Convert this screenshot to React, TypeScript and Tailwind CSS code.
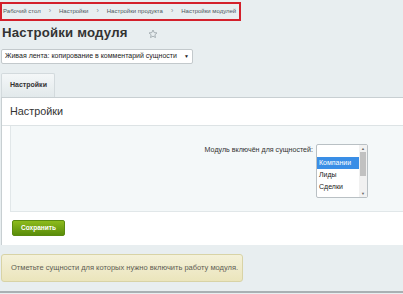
import React from "react";

export default function App() {
  const f = { fontFamily: '"Liberation Sans", Arial, sans-serif' };
  return (
    <div style={f} className="w-[403px] h-[294px] overflow-hidden bg-[#e8eef0] relative">
      {/* breadcrumb */}
      <div className="pt-[2px]">
        <div className="ml-0 w-[241px] h-[19px] border-2 border-[#d3202b] flex items-center gap-[8px] pl-[1px] text-[6px] text-[#4f5960] whitespace-nowrap">
          <span>Рабочий стол</span>
          <span className="text-[7px] text-[#8a9298]">›</span>
          <span>Настройки</span>
          <span className="text-[7px] text-[#8a9298]">›</span>
          <span>Настройки продукта</span>
          <span className="text-[7px] text-[#8a9298]">›</span>
          <span>Настройки модулей</span>
        </div>
      </div>
      {/* title */}
      <div className="flex items-center h-[22px] pl-[2px] mt-[1px]">
        <span className="text-[13.2px] font-bold text-[#333] tracking-[0.2px]">Настройки модуля</span>
        <svg className="ml-[20px] mt-[1px]" width="10" height="10" viewBox="0 0 24 24" fill="none" stroke="#9aa3a8" strokeWidth="2">
          <path d="M12 2.5l2.9 6.2 6.6.7-5 4.5 1.4 6.6L12 17.2 6.1 20.5l1.4-6.6-5-4.5 6.6-.7z" />
        </svg>
      </div>
      {/* select */}
      <div className="mt-[5px] ml-[1px] w-[192px] h-[15px] bg-white border border-[#c3c9cc] rounded-[2px] flex items-center justify-between px-[3px] text-[7px] text-[#222]">
        <span>Живая лента: копирование в комментарий сущности</span>
        <span className="text-[5px]">▼</span>
      </div>
      {/* tab */}
      <div className="mt-[9px] ml-[1px] flex">
        <div className="w-[54px] h-[24px] bg-gradient-to-b from-[#f4f7f8] to-[#e2e9eb] border border-b-0 border-[#d3dadd] rounded-t-[2px] flex items-center pl-[8px] text-[7px] font-bold text-[#333]">
          Настройки
        </div>
      </div>
      {/* panel */}
      <div className="ml-[1px] bg-white border-t border-l border-[#c8cfd2] h-[148px]">
        <div className="h-[28px] flex items-center pl-[8px] text-[10.8px] text-[#333] border-b border-[#dde3e5]">
          Настройки
        </div>
        <div className="ml-[8px] bg-[#f4f8f9] border-l border-b border-[#e1e7e9] h-[86px] flex justify-end pr-[35px] pt-[18px]">
          <div className="text-[7.1px] text-[#333] mr-[3px] mt-[1px]">Модуль включён для сущностей:</div>
          <div className="w-[52px] h-[54px] bg-white border border-[#b9c0c4] rounded-[2px] flex">
            <div className="flex-1 pt-[12px] text-[7px] text-[#222] flex flex-col">
              <div className="bg-[#3a8ee6] text-white h-[12px] flex items-center pl-[2px]">Компании</div>
              <div className="h-[12px] flex items-center pl-[2px]">Лиды</div>
              <div className="h-[12px] flex items-center pl-[2px]">Сделки</div>
            </div>
            <div className="w-[8px] bg-[#f1f1f1] flex flex-col items-center">
              <span className="text-[4px] leading-[7px] text-[#666]">▲</span>
              <div className="w-[6px] h-[24px] bg-[#c1c1c1]" />
              <div className="flex-1" />
              <span className="text-[4px] leading-[7px] text-[#666]">▼</span>
            </div>
          </div>
        </div>
        <div className="pl-[10px] pt-[8px]">
          <div className="w-[53px] h-[16px] rounded-[2px] bg-gradient-to-b from-[#8dbb1c] to-[#5a8d0a] border border-[#5b8a10] flex items-center justify-center text-[6.5px] font-bold text-white">
            Сохранить
          </div>
        </div>
      </div>
      {/* note */}
      <div className="mt-[9px] ml-[1px] w-[242px] h-[28px] rounded-[3px] border border-[#d8d3a6] bg-gradient-to-b from-[#f4f1d9] to-[#ebe5bc] flex items-center pl-[9px] text-[7.5px] text-[#5d5d55] whitespace-nowrap">
        Отметьте сущности для которых нужно включить работу модуля.
      </div>
      <div className="absolute left-0 right-0 bottom-[1px] h-[2px] bg-[#a9b0b3]" />
    </div>
  );
}
